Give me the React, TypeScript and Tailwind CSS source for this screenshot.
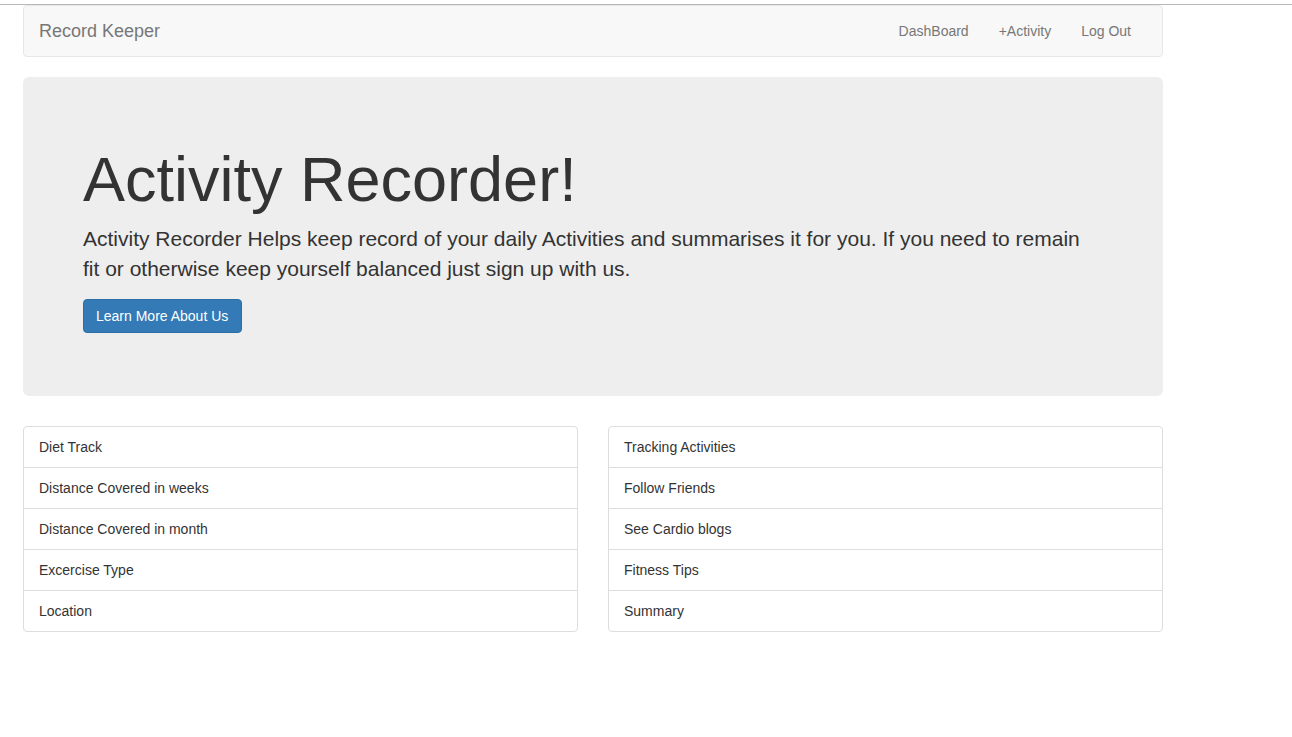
import React from "react";

const left = ["Diet Track", "Distance Covered in weeks", "Distance Covered in month", "Excercise Type", "Location"];
const right = ["Tracking Activities", "Follow Friends", "See Cardio blogs", "Fitness Tips", "Summary"];

function ListGroup({ items }: { items: string[] }) {
  return (
    <ul className="flex flex-col">
      {items.map((t, i) => (
        <li
          key={t}
          className={`border border-[#dddddd] bg-white px-[15px] py-[10px] leading-[20px] text-[14px] text-[#333333] ${i > 0 ? "-mt-px" : ""} ${i === 0 ? "rounded-t-[4px]" : ""} ${i === items.length - 1 ? "rounded-b-[4px]" : ""}`}
        >
          {t}
        </li>
      ))}
    </ul>
  );
}

export default function App() {
  return (
    <div className="min-h-[737px] bg-white font-['Liberation_Sans',Arial,sans-serif] text-[#333333]">
      <div className="h-[4px] bg-white" />
      <div className="h-px bg-[#b8b8b8]" />
      <div className="ml-[23px] w-[1140px]">
        <nav className="flex h-[52px] items-center justify-between rounded-[4px] border border-[#e7e7e7] bg-[#f8f8f8] pr-[16px]">
          <a className="px-[15px] py-[15px] text-[18px] leading-[20px] text-[#777777]">Record Keeper</a>
          <ul className="flex">
            <li className="px-[15px] py-[15px] text-[14px] leading-[20px] text-[#777777]">DashBoard</li>
            <li className="px-[15px] py-[15px] text-[14px] leading-[20px] text-[#777777]">+Activity</li>
            <li className="px-[15px] py-[15px] text-[14px] leading-[20px] text-[#777777]">Log Out</li>
          </ul>
        </nav>
        <div className="mt-[20px] rounded-[6px] bg-[#eeeeee] px-[60px] pt-[48px] pb-[48px]">
          <h1 className="mt-[20px] mb-[10px] text-[63px] leading-[69px] text-[#333333]">Activity Recorder!</h1>
          <p className="mb-[15px] pr-[20px] text-[21px] leading-[30px] font-light text-[#333333]">
            Activity Recorder Helps keep record of your daily Activities and summarises it for you. If you need to remain fit or otherwise keep yourself balanced just sign up with us.
          </p>
          <p className="mb-[15px]">
            <a className="inline-block rounded-[4px] border border-[#2e6da4] bg-[#337ab7] py-[6px] pr-[13px] pl-[12px] text-[14px] leading-[20px] text-white">
              Learn More About Us
            </a>
          </p>
        </div>
        <div className="mt-[30px] grid grid-cols-2 gap-[30px]">
          <ListGroup items={left} />
          <ListGroup items={right} />
        </div>
      </div>
    </div>
  );
}
